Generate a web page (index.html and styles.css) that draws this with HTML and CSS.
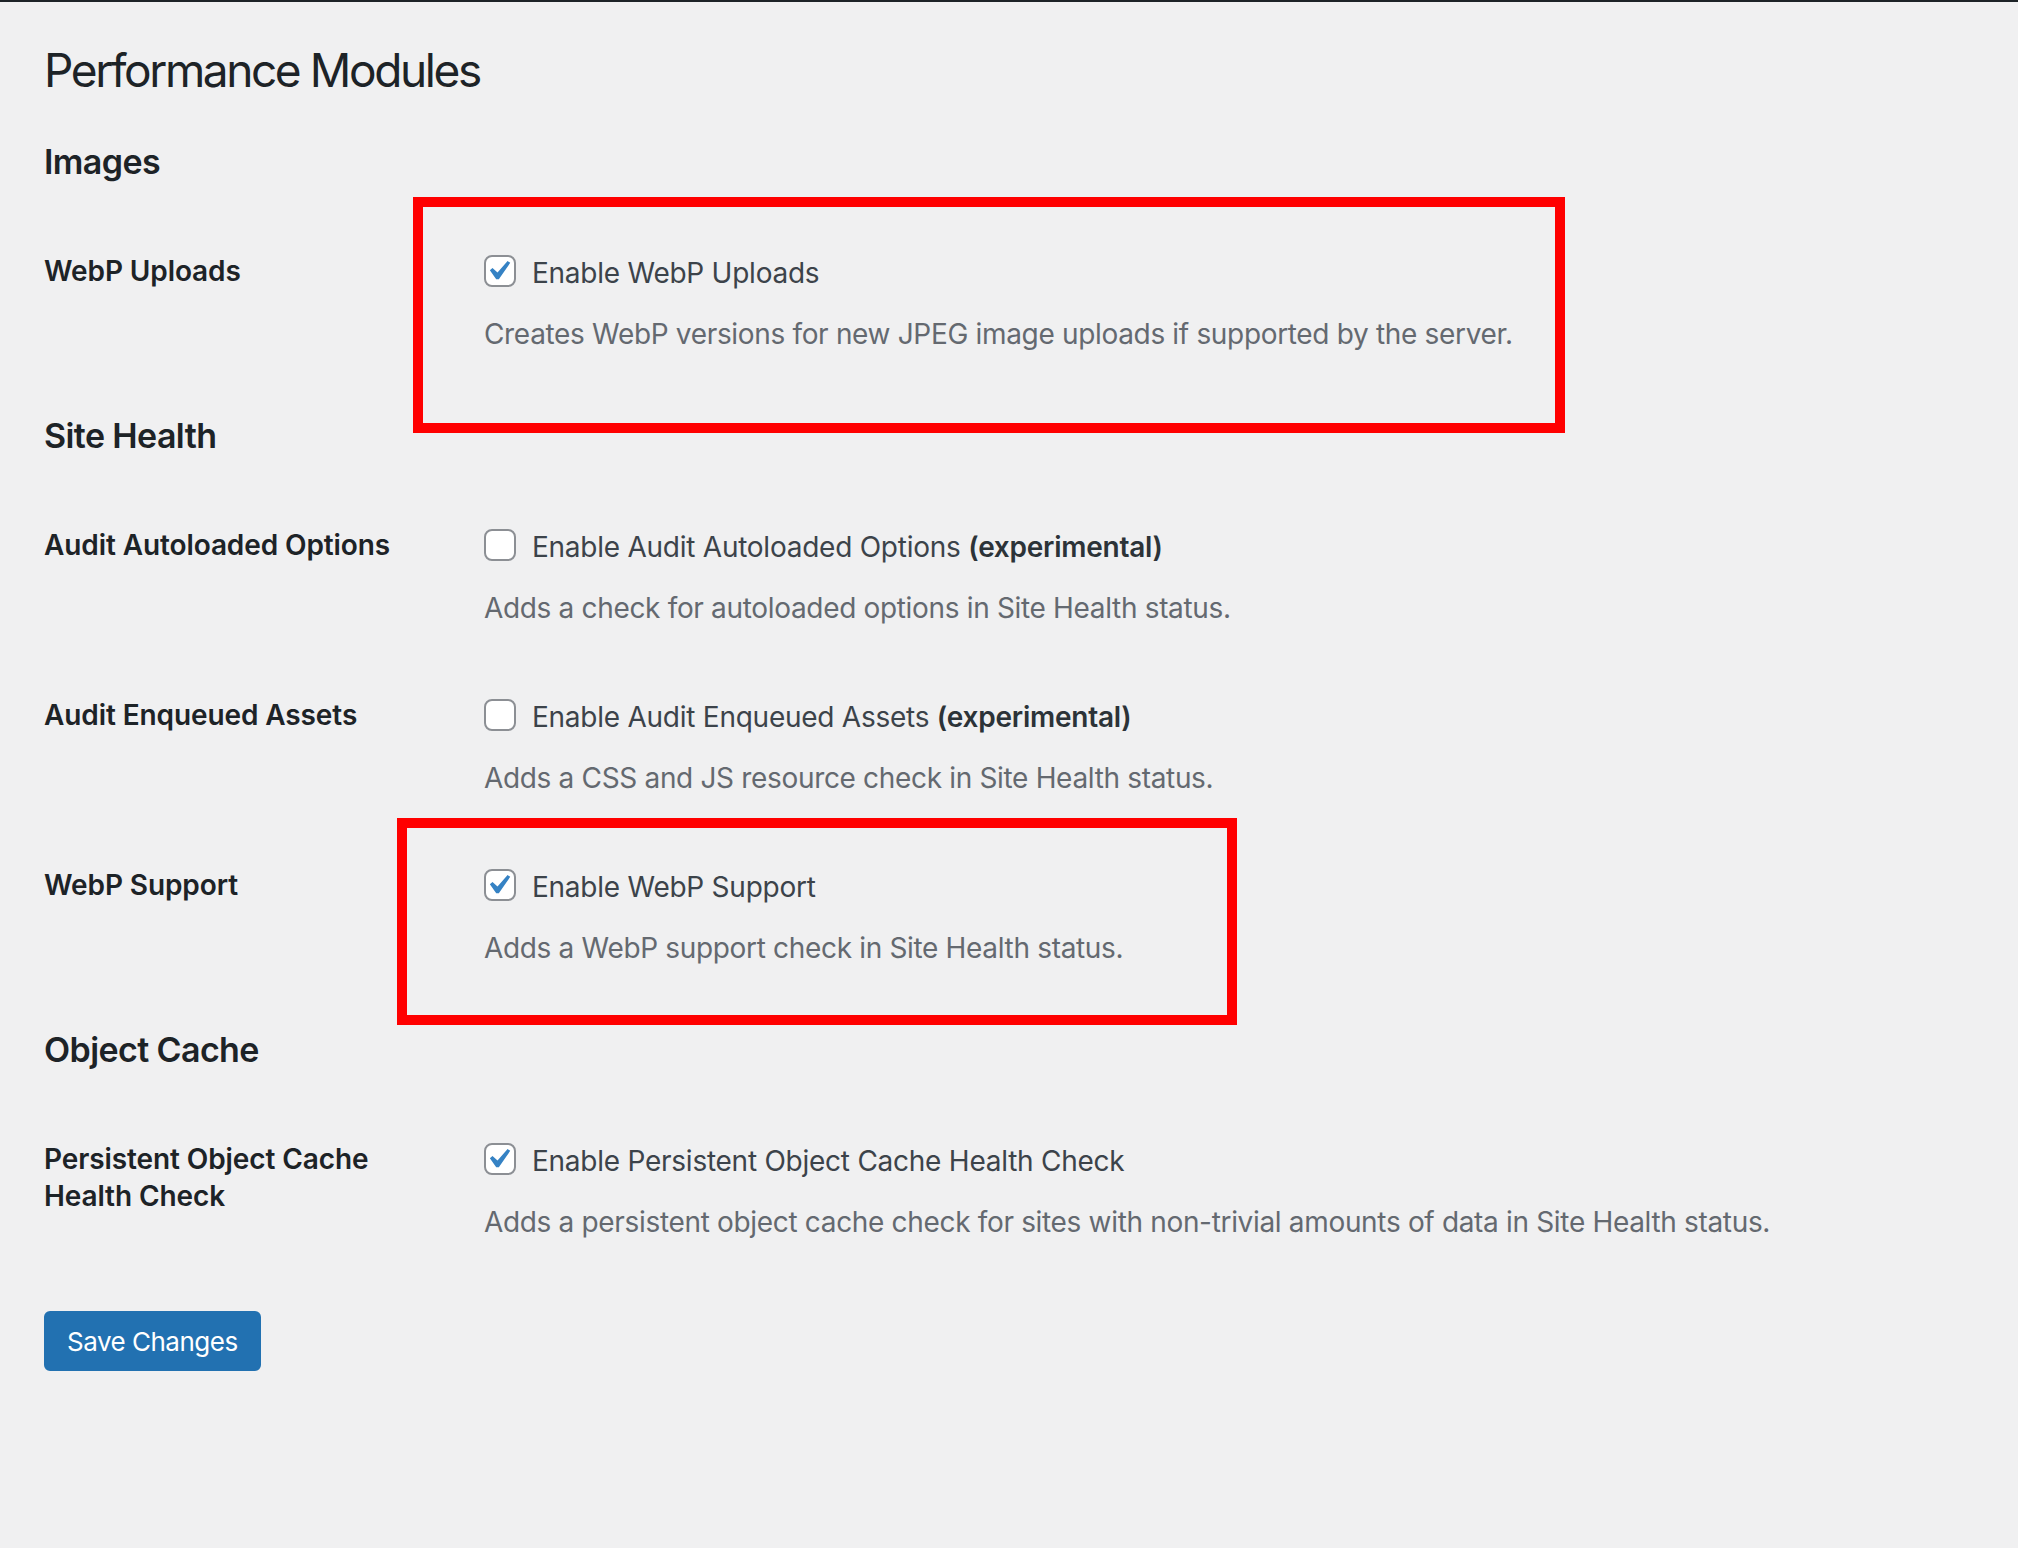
FILE: index.html
```html
<!DOCTYPE html>
<html lang="en">
<head>
<meta charset="utf-8">
<title>Performance Modules</title>
<link rel="stylesheet" href="styles.css">
</head>
<body>
<div class="topbar"></div>
<div class="wrap">
  <h1 class="page-title">Performance Modules</h1>
  <form class="settings">
    <h2 class="section-title">Images</h2>
    <div class="form-table">
      <div class="row">
        <div class="th">WebP Uploads</div>
        <div class="td">
          <label class="check-label"><span class="cb is-checked"><svg viewBox="3.81 2.86 14.29 14.29" width="28" height="28"><path d="M14.83 4.89l1.34.94-5.81 8.38H9.02L5.78 9.67l1.34-1.25 2.57 2.4z" fill="#3582c4"/></svg></span>Enable WebP Uploads</label>
          <p class="description">Creates WebP versions for new JPEG image uploads if supported by the server.</p>
        </div>
      </div>
    </div>

    <h2 class="section-title">Site Health</h2>
    <div class="form-table">
      <div class="row">
        <div class="th">Audit Autoloaded Options</div>
        <div class="td">
          <label class="check-label"><span class="cb"></span>Enable Audit Autoloaded Options&nbsp;<strong>(experimental)</strong></label>
          <p class="description">Adds a check for autoloaded options in Site Health status.</p>
        </div>
      </div>
      <div class="row">
        <div class="th">Audit Enqueued Assets</div>
        <div class="td">
          <label class="check-label"><span class="cb"></span>Enable Audit Enqueued Assets&nbsp;<strong>(experimental)</strong></label>
          <p class="description">Adds a CSS and JS resource check in Site Health status.</p>
        </div>
      </div>
      <div class="row">
        <div class="th">WebP Support</div>
        <div class="td">
          <label class="check-label"><span class="cb is-checked"><svg viewBox="3.81 2.86 14.29 14.29" width="28" height="28"><path d="M14.83 4.89l1.34.94-5.81 8.38H9.02L5.78 9.67l1.34-1.25 2.57 2.4z" fill="#3582c4"/></svg></span>Enable WebP Support</label>
          <p class="description">Adds a WebP support check in Site Health status.</p>
        </div>
      </div>
    </div>

    <h2 class="section-title">Object Cache</h2>
    <div class="form-table">
      <div class="row">
        <div class="th">Persistent Object Cache Health Check</div>
        <div class="td">
          <label class="check-label"><span class="cb is-checked"><svg viewBox="3.81 2.86 14.29 14.29" width="28" height="28"><path d="M14.83 4.89l1.34.94-5.81 8.38H9.02L5.78 9.67l1.34-1.25 2.57 2.4z" fill="#3582c4"/></svg></span>Enable Persistent Object Cache Health Check</label>
          <p class="description">Adds a persistent object cache check for sites with non-trivial amounts of data in Site Health status.</p>
        </div>
      </div>
    </div>

    <p class="submit"><button type="button" class="button-primary">Save Changes</button></p>
  </form>
</div>
<div class="highlight highlight-uploads"></div>
<div class="highlight highlight-support"></div>
</body>
</html>
```

FILE: styles.css
```css
html {
  background: #f0f0f1;
}
body {
  margin: 0;
  min-height: 1548px;
  background: #f0f0f1;
  font-family: Inter, "Noto Sans", "Liberation Sans", sans-serif;
  color: #3c434a;
  position: relative;
}
.topbar {
  height: 2px;
  background: #1d2327;
}
.wrap {
  padding: 0 44px;
}
.page-title {
  margin: 0;
  padding: 38px 0 9px;
  font-size: 46px;
  line-height: 60px;
  font-weight: 400;
  letter-spacing: -2.4px;
  color: #1d2327;
}
.settings {
  margin: 0;
}
.section-title {
  margin: 31px 0 29px;
  font-size: 34px;
  line-height: 44px;
  font-weight: 600;
  letter-spacing: -0.6px;
  color: #1d2327;
}
.form-table {
  display: flex;
  flex-direction: column;
}
.row {
  display: flex;
  align-items: flex-start;
}
.th {
  width: 420px;
  box-sizing: border-box;
  padding: 40px 20px 20px 0;
  font-size: 28px;
  line-height: 37px;
  font-weight: 600;
  letter-spacing: -0.1px;
  color: #1d2327;
  flex-shrink: 0;
}
.td {
  padding: 40px 20px 29px;
  font-size: 28px;
}
.check-label {
  display: flex;
  align-items: center;
  height: 40px;
  line-height: 40px;
  color: #3c434a;
  letter-spacing: -0.25px;
  white-space: nowrap;
}
.check-label strong {
  font-weight: 600;
  color: #2c3338;
}
.cb {
  display: inline-flex;
  box-sizing: border-box;
  width: 32px;
  height: 32px;
  border: 2px solid #8c8f94;
  border-radius: 8px;
  background: #fff;
  margin: -4px 16px 0 0;
  flex-shrink: 0;
  overflow: visible;
}
.cb svg {
  display: block;
  overflow: visible;
}
.description {
  margin: 21px 0 0;
  line-height: 40px;
  color: #646970;
  letter-spacing: -0.33px;
  white-space: nowrap;
}
.submit {
  margin: 40px 0 0;
  padding: 0;
}
.button-primary {
  height: 60px;
  padding: 2px 21px 0;
  border: 2px solid #2271b1;
  border-radius: 6px;
  background: #2271b1;
  color: #fff;
  font-family: inherit;
  font-size: 26px;
  line-height: 54px;
  letter-spacing: -0.5px;
}
.highlight {
  position: absolute;
  box-sizing: border-box;
  border: 10px solid #ff0000;
}
.highlight-uploads {
  left: 413px;
  top: 197px;
  width: 1152px;
  height: 236px;
}
.highlight-support {
  left: 397px;
  top: 818px;
  width: 840px;
  height: 207px;
}
```
